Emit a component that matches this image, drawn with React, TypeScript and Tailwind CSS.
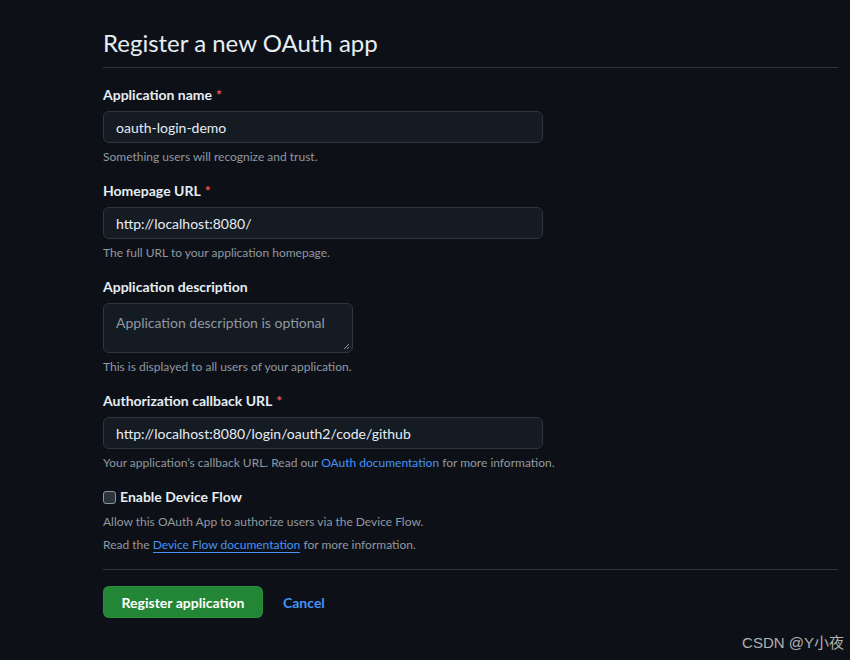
import React from "react";

const font = { fontFamily: 'Lato, "Noto Sans CJK SC", sans-serif' };

function Field({
  label,
  required,
  value,
  help,
}: {
  label: string;
  required?: boolean;
  value: string;
  help: React.ReactNode;
}) {
  return (
    <div className="flex flex-col">
      <label className="text-[14px] leading-[20px] font-bold text-[#e6edf3]">
        {label}
        {required && <span className="text-[#f85149] ml-[4px]">*</span>}
      </label>
      <div className="mt-[6px] w-[440px] h-[32px] rounded-[6px] border border-[#30363d] bg-[#151b23] px-[12px] flex items-center text-[14px] text-[#e6edf3]">
        {value}
      </div>
      <p className="mt-[5px] text-[12px] leading-[18px] text-[#9198a1]">{help}</p>
    </div>
  );
}

export default function App() {
  return (
    <div className="w-[850px] h-[660px] bg-[#0d1117] relative overflow-hidden" style={font}>
      <div className="pl-[103px] pr-[12px] pt-[25px]">
        <h1 className="text-[24px] leading-[36px] font-normal text-[#e6edf3] pb-[6px] border-b border-[#30363d]">
          Register a new OAuth app
        </h1>

        <div className="mt-[17px] flex flex-col gap-[15px]">
          <Field
            label="Application name"
            required
            value="oauth-login-demo"
            help="Something users will recognize and trust."
          />
          <Field
            label="Homepage URL"
            required
            value="http://localhost:8080/"
            help="The full URL to your application homepage."
          />
          <div className="flex flex-col">
            <label className="text-[14px] leading-[20px] font-bold text-[#e6edf3]">
              Application description
            </label>
            <div className="mt-[6px] w-[250px] h-[50px] rounded-[6px] border border-[#30363d] bg-[#151b23] px-[12px] pt-[9px] text-[14px] leading-[20px] text-[#9198a1] relative">
              Application description is optional
              <svg className="absolute right-[2px] bottom-[2px]" width="7" height="7" viewBox="0 0 7 7">
                <path d="M1 6 L6 1 M4 6 L6 4" stroke="#8b949e" strokeWidth="1" />
              </svg>
            </div>
            <p className="mt-[5px] text-[12px] leading-[18px] text-[#9198a1]">
              This is displayed to all users of your application.
            </p>
          </div>
          <Field
            label="Authorization callback URL"
            required
            value="http://localhost:8080/login/oauth2/code/github"
            help={
              <>
                Your application’s callback URL. Read our{" "}
                <span className="text-[#4493f8]">OAuth documentation</span> for more information.
              </>
            }
          />
        </div>

        <div className="mt-[15px] flex items-center gap-[4px]">
          <span className="w-[13px] h-[13px] rounded-[3px] border border-[#8b949e] bg-[#2d333b]" />
          <span className="text-[14px] leading-[20px] font-bold text-[#e6edf3]">
            Enable Device Flow
          </span>
        </div>
        <p className="mt-[6px] text-[12px] leading-[18px] text-[#9198a1]">
          Allow this OAuth App to authorize users via the Device Flow.
        </p>
        <p className="mt-[5px] text-[12px] leading-[18px] text-[#9198a1]">
          Read the{" "}
          <span className="text-[#4493f8] border-b border-[#4493f8]">Device Flow documentation</span>{" "}
          for more information.
        </p>

        <div className="mt-[15px] border-t border-[#30363d]" />

        <div className="mt-[16px] flex items-center gap-[20px]">
          <button className="w-[160px] h-[32px] rounded-[6px] bg-[#238636] border border-[#2ea043]/40 text-white text-[14px] font-bold">
            Register application
          </button>
          <span className="text-[14px] font-bold text-[#4493f8]">Cancel</span>
        </div>
      </div>

      <div className="absolute right-[6px] bottom-[6px] text-[15px] text-[#b0b0b0]" style={{ fontFamily: '"Liberation Sans", "Noto Sans CJK SC", sans-serif' }}>
        CSDN @Y小夜
      </div>
    </div>
  );
}
